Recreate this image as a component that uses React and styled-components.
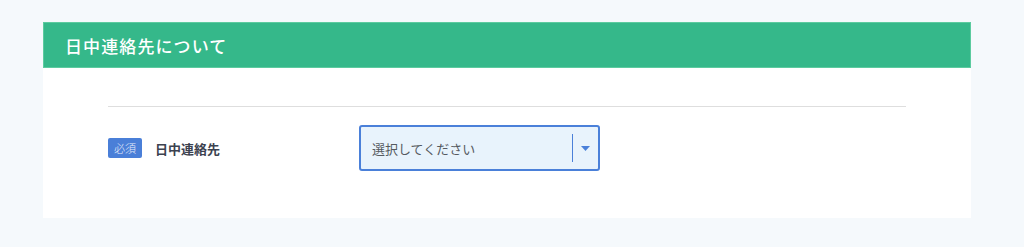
import React from "react";
import styled, { createGlobalStyle } from "styled-components";

const Global = createGlobalStyle`
  html, body { margin: 0; padding: 0; background: #f5f9fc; }
  body { font-family: "Noto Sans CJK JP", "Noto Sans", sans-serif; }
  * { box-sizing: border-box; }
`;

const Page = styled.div`
  padding: 22px 53px 0 43px;
  min-height: 247px;
`;

const Card = styled.section`
  background: #ffffff;
  height: 196px;
  display: flex;
  flex-direction: column;
`;

const Header = styled.h2`
  margin: 0;
  height: 46px;
  background: #35b88a;
  border: 1px solid #5ccb9f;
  display: flex;
  align-items: center;
  padding-left: 21px;
  color: #ffffff;
  font-size: 17px;
  font-weight: 500;
  letter-spacing: 1.1px;
`;

const Body = styled.div`
  padding: 38px 65px 0 65px;
`;

const Divider = styled.hr`
  margin: 0;
  border: none;
  border-top: 1px solid #dedede;
`;

const Row = styled.div`
  display: grid;
  grid-template-columns: 251px 241px;
  align-items: center;
  margin-top: 18px;
`;

const LabelCell = styled.div`
  display: flex;
  align-items: center;
  gap: 13px;
`;

const Badge = styled.span`
  display: inline-flex;
  align-items: center;
  justify-content: center;
  width: 34px;
  height: 20px;
  border-radius: 2px;
  background: #4a7fd8;
  color: #e8eefb;
  font-size: 11px;
  font-weight: 300;
`;

const Label = styled.span`
  font-size: 13px;
  font-weight: 700;
  color: #3c4250;
`;

const Select = styled.div`
  height: 46px;
  border: 2px solid #4a80d9;
  border-radius: 3px;
  background: #e8f3fc;
  display: flex;
  align-items: center;
  padding-left: 11px;
`;

const Placeholder = styled.span`
  flex: 1;
  font-size: 13px;
  color: #555a60;
`;

const Sep = styled.span`
  width: 1px;
  height: 28px;
  background: #4a80d9;
`;

const Arrow = styled.span`
  width: 25px;
  display: flex;
  justify-content: center;
  align-items: center;
`;

export default function App() {
  return (
    <>
      <Global />
      <Page>
        <Card>
          <Header>日中連絡先について</Header>
          <Body>
            <Divider />
            <Row>
              <LabelCell>
                <Badge>必須</Badge>
                <Label>日中連絡先</Label>
              </LabelCell>
              <Select>
                <Placeholder>選択してください</Placeholder>
                <Sep />
                <Arrow>
                  <svg width="9" height="5" viewBox="0 0 9 5">
                    <path d="M0 0 H9 L4.5 5 Z" fill="#4a80d9" />
                  </svg>
                </Arrow>
              </Select>
            </Row>
          </Body>
        </Card>
      </Page>
    </>
  );
}
